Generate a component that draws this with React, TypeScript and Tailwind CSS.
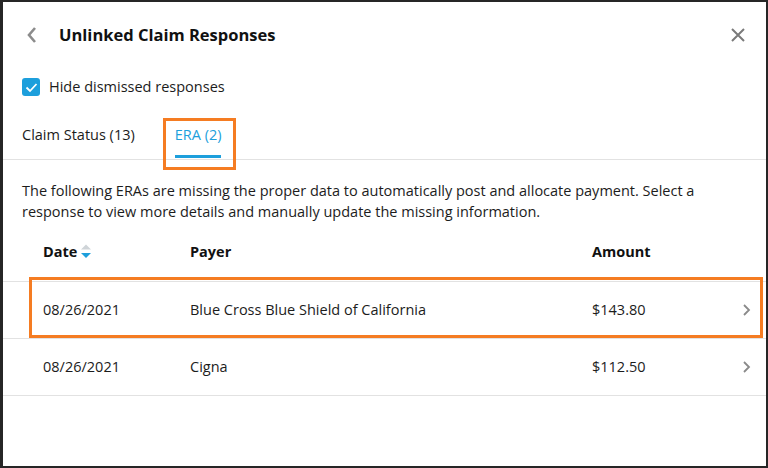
import React from "react";

function Chevron({ className }: { className?: string }) {
  return (
    <svg width="10" height="14" viewBox="0 0 10 14" className={className}>
      <path d="M3 2l5 5-5 5" fill="none" stroke="#8a8a8a" strokeWidth="1.8" />
    </svg>
  );
}

export default function App() {
  const rows = [
    { date: "08/26/2021", payer: "Blue Cross Blue Shield of California", amount: "$143.80", hl: true },
    { date: "08/26/2021", payer: "Cigna", amount: "$112.50", hl: false },
  ];
  return (
    <div
      className="w-[768px] h-[468px] bg-white border-2 border-l-[3px] border-[#262626] text-[#1c1c1c] overflow-hidden"
      style={{ fontFamily: '"Open Sans", sans-serif' }}
    >
      <div className="flex items-center h-[64px] pt-[2px] pl-[22px] pr-[20px]">
        <svg width="14" height="18" viewBox="0 0 14 18">
          <path d="M10 2L4 9l6 7" fill="none" stroke="#8c8c8c" strokeWidth="2.6" />
        </svg>
        <div className="ml-[20px] text-[16.5px] font-bold text-[#111]">Unlinked Claim Responses</div>
        <div className="flex-1" />
        <svg width="16" height="16" viewBox="0 0 16 16">
          <path d="M2 2l12 12M14 2L2 14" stroke="#7a7a7a" strokeWidth="2" />
        </svg>
      </div>
      <div className="flex items-center h-[24px] mt-[9px] pl-[19px]">
        <div className="w-[18px] h-[18px] rounded-[3px] bg-[#1d9fdc] flex items-center justify-center">
          <svg width="13" height="11" viewBox="0 0 13 11">
            <path d="M1.5 5.5l3.5 3.5 6.5-7" fill="none" stroke="white" strokeWidth="1.8" />
          </svg>
        </div>
        <div className="ml-[9px] text-[14.5px]">Hide dismissed responses</div>
      </div>
      <div className="relative flex items-end h-[47px] mt-[14px] pl-[19px] border-b border-[#e2e2e2]">
        <div className="pb-[13px] text-[14.5px]">Claim Status (13)</div>
        <div className="ml-[40px] pb-[1px] text-[14.5px] text-[#1d9fdc] flex flex-col items-center">
          <div className="pb-[9px]">ERA (2)</div>
          <div className="h-[3px] w-[46px] bg-[#1d9fdc]" />
        </div>
        <div className="absolute left-[160px] top-[5px] w-[73px] h-[52px] border-[3px] border-[#f57c22]" />
      </div>
      <div className="pl-[19px] pr-[40px] pt-[20px] text-[14.5px] leading-[21px]">
        The following ERAs are missing the proper data to automatically post and allocate payment. Select a response to view more details and manually update the missing information.
      </div>
      <div>
        <div className="flex items-center h-[60px] border-b border-[#e2e2e2] text-[14.5px] font-bold text-[#111]">
          <div className="w-[187px] pl-[40px] flex items-center">
            Date
            <svg width="12" height="16" viewBox="0 0 12 16" className="ml-[3px] mt-[-2px]">
              <path d="M1 6.5L6 1.5l5 5z" fill="#cfd4d8" />
              <path d="M1 10l5 5 5-5z" fill="#1d9fdc" />
            </svg>
          </div>
          <div className="w-[402px]">Payer</div>
          <div>Amount</div>
        </div>
        {rows.map((r, i) => (
          <div key={i} className="relative flex items-center h-[57px] border-b border-[#e2e2e2] text-[14.5px]">
            <div className="w-[187px] pl-[40px]">{r.date}</div>
            <div className="w-[402px]">{r.payer}</div>
            <div className="flex-1">{r.amount}</div>
            <Chevron className="mr-[15px]" />
            {r.hl && (
              <div className="absolute left-[26px] top-[-5px] w-[734px] h-[61px] border-[3px] border-[#f57c22]" />
            )}
          </div>
        ))}
      </div>
    </div>
  );
}
